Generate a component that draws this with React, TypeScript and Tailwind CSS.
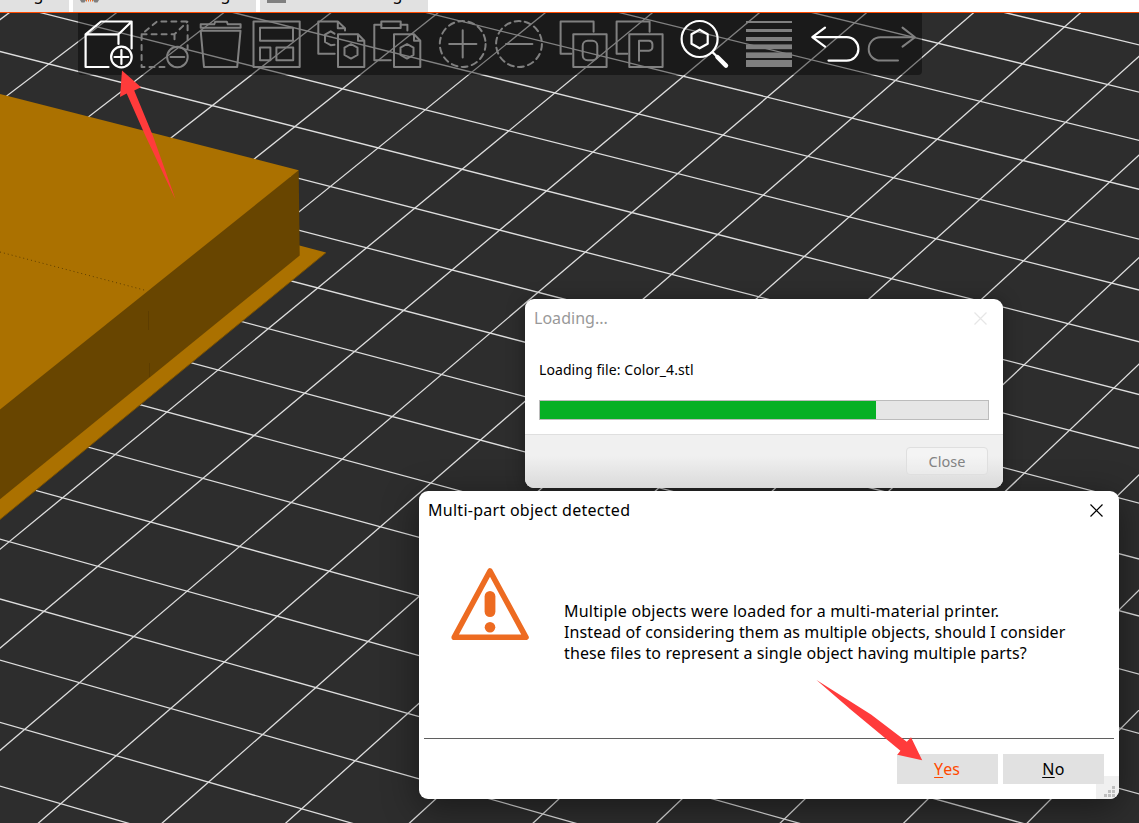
import type { ReactNode } from "react";

/* Perspective mapping of the print bed: cell (i, j) to screen pixels. */
function bed(i: number, j: number): [number, number] {
  const w = 1 - 0.00379 * i - 0.00706 * j;
  return [
    (80.47 * i - 49.18 * j + 938.3) / w,
    (20.31 * i + 36.57 * j + 43.3) / w,
  ];
}

function range(a: number, b: number) {
  return Array.from({ length: b - a + 1 }, (_, k) => a + k);
}

function BedGrid() {
  const lines: [number, number, number, number][] = [
    ...range(-16, 14).map((i) => [...bed(i, -14), ...bed(i, 28)] as [number, number, number, number]),
    ...range(-12, 26).map((j) => [...bed(-22, j), ...bed(20, j)] as [number, number, number, number]),
  ];
  return (
    <g stroke="#dedede" strokeWidth="1.3">
      {lines.map(([x1, y1, x2, y2], k) => (
        <line key={k} x1={x1} y1={y1} x2={x2} y2={y2} />
      ))}
    </g>
  );
}

function Scene() {
  return (
    <svg className="absolute inset-0" width="1139" height="823" viewBox="0 0 1139 823">
      <rect width="1139" height="823" fill="#2d2d2d" />
      <BedGrid />
      <path d="M290 243L326 252.5L0 519.5V480Z" fill="#ab7100" />
      <path d="M326 252.7L0 519.5" stroke="#7d5300" strokeWidth="1" />
      <path d="M298.7 170L299.7 255.5L0 499.3V400Z" fill="#684500" />
      <path d="M0 94L298.7 170.2L0 409.5Z" fill="#ab7100" />
      <path d="M0 252L146 290.5" stroke="#5f3f00" strokeWidth="1" strokeDasharray="1 3" />
      <path d="M148.5 311V330M149.5 363V377" stroke="#553800" strokeWidth=".6" />
    </svg>
  );
}

const BRIGHT = "#ffffff";
const DIM = "#808080";

function Icon({ color = DIM, width = 2, children }: { color?: string; width?: number; children: ReactNode }) {
  return (
    <svg
      className="block shrink-0 overflow-visible"
      width="48"
      height="48"
      viewBox="0 0 48 48"
      fill="none"
      stroke={color}
      strokeWidth={width}
      strokeLinecap="round"
      strokeLinejoin="round"
    >
      {children}
    </svg>
  );
}

const FrontPage = () => (
  <>
    <path d="M21 14.3H41L47.3 20.7V47H21Z" />
    <path d="M41 14.8V20.7H47" />
    <path d="M34 24L40.5 27.7V35L34 38.6L27.5 35V27.7Z" />
  </>
);

const BackSquare = () => (
  <>
    <path d="M12.3 33.7H1.6V1.4H34.6V11.7" />
    <rect x="14.3" y="14.3" width="33.3" height="32.7" />
  </>
);

function Toolbar() {
  return (
    <div className="absolute left-[78px] top-[13px] flex h-[62px] w-[844px] gap-[17px] rounded-b-[4px] bg-black/42 pl-1.5 pt-[7px]">
      <div className="flex gap-2">
        <Icon color={BRIGHT} width={2.2}>
          <path d="M24.5 47H1.6V14.3L17 1.5H47.6V28.5M1.6 14.3H34.5L47.4 1.7M34.5 14.3V24" />
          <circle cx="37.4" cy="37" r="10.3" />
          <path d="M30.5 37H44.3M37.4 30.1V43.9" />
        </Icon>
        <Icon>
          <path d="M24.5 47H1.6V14.3L17 1.5H47.6V28.5M1.6 14.3H34.5L47.4 1.7M34.5 14.3V24" strokeDasharray="5 5" />
          <circle cx="37.4" cy="37" r="10.3" />
          <path d="M30.5 37H44.3" />
        </Icon>
        <Icon>
          <path d="M4.7 7.8V4.3H18.2L19.2 1.7H30.8L31.8 4.3H44.6V7.8Z" />
          <path d="M4.7 10.8H44.5L41.2 47H8Z" />
        </Icon>
        <Icon>
          <rect x="1.5" y="1.4" width="46.2" height="45.6" />
          <rect x="8" y="7.8" width="33" height="12.9" />
          <rect x="8" y="27.6" width="10.4" height="12.7" />
          <rect x="24.4" y="27.6" width="16.8" height="12.7" />
        </Icon>
      </div>
      <div className="flex gap-2">
        <Icon>
          <path d="M17.7 33.7H1.3V1.4H20.8L28 8.3V10.5M20.8 1.8V8.3H27.6" />
          <path d="M17.5 13.7L13.7 11.3L8 14.6V22L13.7 25.2L17.5 24.8" />
          <FrontPage />
        </Icon>
        <Icon>
          <path d="M17.7 40.3H1.3V4.7H8.3M27.7 4.7H34.4V10.5" />
          <rect x="8.3" y="1.4" width="19.4" height="6.6" />
          <FrontPage />
        </Icon>
      </div>
      <div className="flex gap-2">
        <Icon>
          <circle cx="24.7" cy="24" r="22.9" strokeDasharray="6 4.28" />
          <path d="M11.2 24H38.4M24.7 10.3V37.6" />
        </Icon>
        <Icon>
          <circle cx="25" cy="24" r="22.9" strokeDasharray="6 4.28" />
          <path d="M12 24H38.4" />
        </Icon>
      </div>
      <div className="flex gap-2">
        <Icon>
          <BackSquare />
          <rect x="23.7" y="20.7" width="14.6" height="19.6" rx="5" />
        </Icon>
        <Icon>
          <BackSquare />
          <path d="M24 40.7V20.7H34A3.5 3.5 0 0 1 37.4 24.2V27.2A3.5 3.5 0 0 1 34 30.7H24.5" />
        </Icon>
      </div>
      <Icon color={BRIGHT} width={2.2}>
        <circle cx="19.6" cy="19" r="18" />
        <path d="M19.6 9.7L27.7 14.3V23.7L19.6 28.3L11.5 23.7V14.3Z" />
        <path d="M33 32.6L37 36.6" />
        <path d="M37.4 37L46 45.6" strokeWidth="4.4" />
      </Icon>
      <Icon>
        <g fill={DIM} stroke="none">
          <rect x="1" y="1" width="46" height="2" />
          <rect x="1" y="9" width="46" height="3" />
          <rect x="1" y="17" width="46" height="4" />
          <rect x="1" y="24.4" width="46" height="4.8" />
          <rect x="1" y="32.4" width="46" height="5.6" />
          <rect x="1" y="40" width="46" height="7" />
        </g>
      </Icon>
      <div className="flex gap-2">
        <Icon color={BRIGHT} width={2.2}>
          <path d="M15 7.6L2.3 17.2L15 26.6M2.6 17.2H36.7A11.7 11.7 0 0 1 36.7 40.6H18.5" />
        </Icon>
        <Icon>
          <path d="M36.500 7.6L49 17.2L36.500 26.6M48.800 17.2H14.400A11.7 11.7 0 0 0 14.400 40.6H32" />
        </Icon>
      </div>
    </div>
  );
}

function TabStrip() {
  const label = "absolute -top-[17px] whitespace-nowrap text-[16px] leading-[22px] text-black";
  return (
    <div className="relative flex h-[13px] gap-1 overflow-hidden border-b border-[#ff4a00] bg-white">
      <div className="relative w-[69px] bg-[#e1e1e1]">
        <span className={label + " right-[18px]"}>Print Settings</span>
      </div>
      <div className="relative w-[183px] bg-[#e1e1e1]">
        <svg className="absolute left-[7px] top-0" width="19" height="3" viewBox="0 0 19 3">
          <path d="M0 0H6L4.500 2.500H1.500ZM13 0H19L17.500 2.500H14.500Z" fill="#808080" />
          <path d="M6 .8H13" stroke="#ed6b21" strokeWidth="1.600" strokeDasharray="1 1" />
        </svg>
        <span className={label + " right-[18px]"}>Filament Settings</span>
      </div>
      <div className="relative w-[168px] bg-[#e1e1e1]">
        <div className="absolute left-[7px] top-0 h-[3px] w-[19px] bg-[#808080]" />
        <span className={label + " right-[18px]"}>Printer Settings</span>
      </div>
    </div>
  );
}

function Cross({ color }: { color: string }) {
  return (
    <svg width="13" height="13" viewBox="0 0 13 13" stroke={color} strokeWidth="1.200">
      <path d="M.5 .5L12.500 12.500M12.500 .5L.5 12.500" />
    </svg>
  );
}

function LoadingDialog() {
  return (
    <div className="absolute left-[525px] top-[299px] flex h-[189px] w-[478px] flex-col overflow-hidden rounded-[9px] bg-white shadow-[0_2px_18px_rgba(0,0,0,0.35)]">
      <div className="flex h-[38px] items-center justify-between pl-[9px] pr-4">
        <span className="text-[16px] tracking-[0.03px] text-[#999999]">Loading...</span>
        <Cross color="#e6e6e6" />
      </div>
      <div className="flex h-[97px] flex-col px-[14px] pt-[22px]">
        <span className="text-[14px] leading-[22px] tracking-[0.08px] text-black">Loading file: Color_4.stl</span>
        <div className="mt-[19px] h-5 border border-[#bcbcbc] bg-[#e6e6e6]">
          <div className="h-full w-[336px] bg-[#06b025]" />
        </div>
      </div>
      <div className="flex flex-1 items-start justify-end border-t border-[#dfdfdf] bg-gradient-to-b from-[#f0f0f0] from-40% to-[#dadada] pr-[15px] pt-3">
        <div className="flex h-7 w-[82px] items-center justify-center rounded-[4px] border border-[#dfdfdf] bg-white/25 pt-0.5 text-[14.5px] text-[#838383]">
          Close
        </div>
      </div>
    </div>
  );
}

function WarningSign() {
  return (
    <svg width="78" height="73" viewBox="0 0 78 73" fill="none">
      <path d="M39 3L75 69.300H3.200Z" stroke="#ed6b21" strokeWidth="5.600" strokeLinejoin="round" />
      <rect x="33.600" y="23" width="10.800" height="26" rx="5.400" fill="#ed6b21" />
      <circle cx="39" cy="59.300" r="5.300" fill="#ed6b21" />
    </svg>
  );
}

function MultiPartDialog() {
  return (
    <div className="absolute left-[419px] top-[491px] flex h-[308px] w-[700px] flex-col overflow-hidden rounded-[9px] bg-white">
      <div className="flex h-[38px] items-center justify-between pl-[9px] pr-4">
        <span className="text-[16px] tracking-[0.27px] text-black">Multi-part object detected</span>
        <Cross color="#000000" />
      </div>
      <div className="flex h-[209px] items-start">
        <div className="ml-8 mt-[39px] w-[113px]">
          <WarningSign />
        </div>
        <p className="mt-[72px] flex flex-col whitespace-nowrap text-[16px] leading-[21px] text-black">
          <span className="tracking-[0.2px]">Multiple objects were loaded for a multi-material printer.</span>
          <span className="tracking-[0.1px]">Instead of considering them as multiple objects, should I consider</span>
          <span className="tracking-[0.11px]">these files to represent a single object having multiple parts?</span>
        </p>
      </div>
      <div className="mx-[5px] h-px bg-[#5f5f5f]" />
      <div className="relative flex flex-1 justify-end gap-[5px] pr-[15px] pt-[15px]">
        <svg className="absolute bottom-0 right-0" width="23" height="23" viewBox="0 0 23 23">
          <rect width="23" height="23" fill="#f0f0f0" />
          <g fill="#bfbfbf">
            <rect x="16" y="10" width="3" height="3" />
            <rect x="12" y="14" width="3" height="3" />
            <rect x="16" y="14" width="3" height="3" />
            <rect x="8" y="18" width="3" height="3" />
            <rect x="12" y="18" width="3" height="3" />
            <rect x="16" y="18" width="3" height="3" />
          </g>
        </svg>
        <div className="relative flex h-[30px] w-[101px] items-center justify-center bg-[#e1e1e1] pr-px text-[16px] text-[#ff4a00]">
          <span className="underline decoration-1 underline-offset-2">Y</span>es
        </div>
        <div className="relative flex h-[30px] w-[101px] items-center justify-center bg-[#e1e1e1] text-[16px] tracking-[0.4px] text-black">
          <span className="underline decoration-1 underline-offset-2">N</span>o
        </div>
      </div>
    </div>
  );
}

function PointerArrows() {
  return (
    <svg className="pointer-events-none absolute inset-0" width="1139" height="823" viewBox="0 0 1139 823" fill="#ff3b3b">
      <path d="M122 70.500L141 87.300L134.200 90.500L153 136L175.500 199.500L145.500 136L126.700 93.500L120 97Z" />
      <path d="M816.500 680L871 714.500L906.800 741.700L911 737.300L922.200 760.200L897.300 754.800L900.400 750.700L850 709Z" />
    </svg>
  );
}

export default function App() {
  return (
    <div className="relative h-[823px] w-[1139px] overflow-hidden bg-[#2d2d2d] font-['Noto_Sans',sans-serif]">
      <Scene />
      <TabStrip />
      <Toolbar />
      <div className="absolute left-[419px] top-[491px] h-[308px] w-[700px] rounded-[9px] shadow-[0_8px_36px_rgba(0,0,0,0.45)]" />
      <LoadingDialog />
      <MultiPartDialog />
      <PointerArrows />
    </div>
  );
}
